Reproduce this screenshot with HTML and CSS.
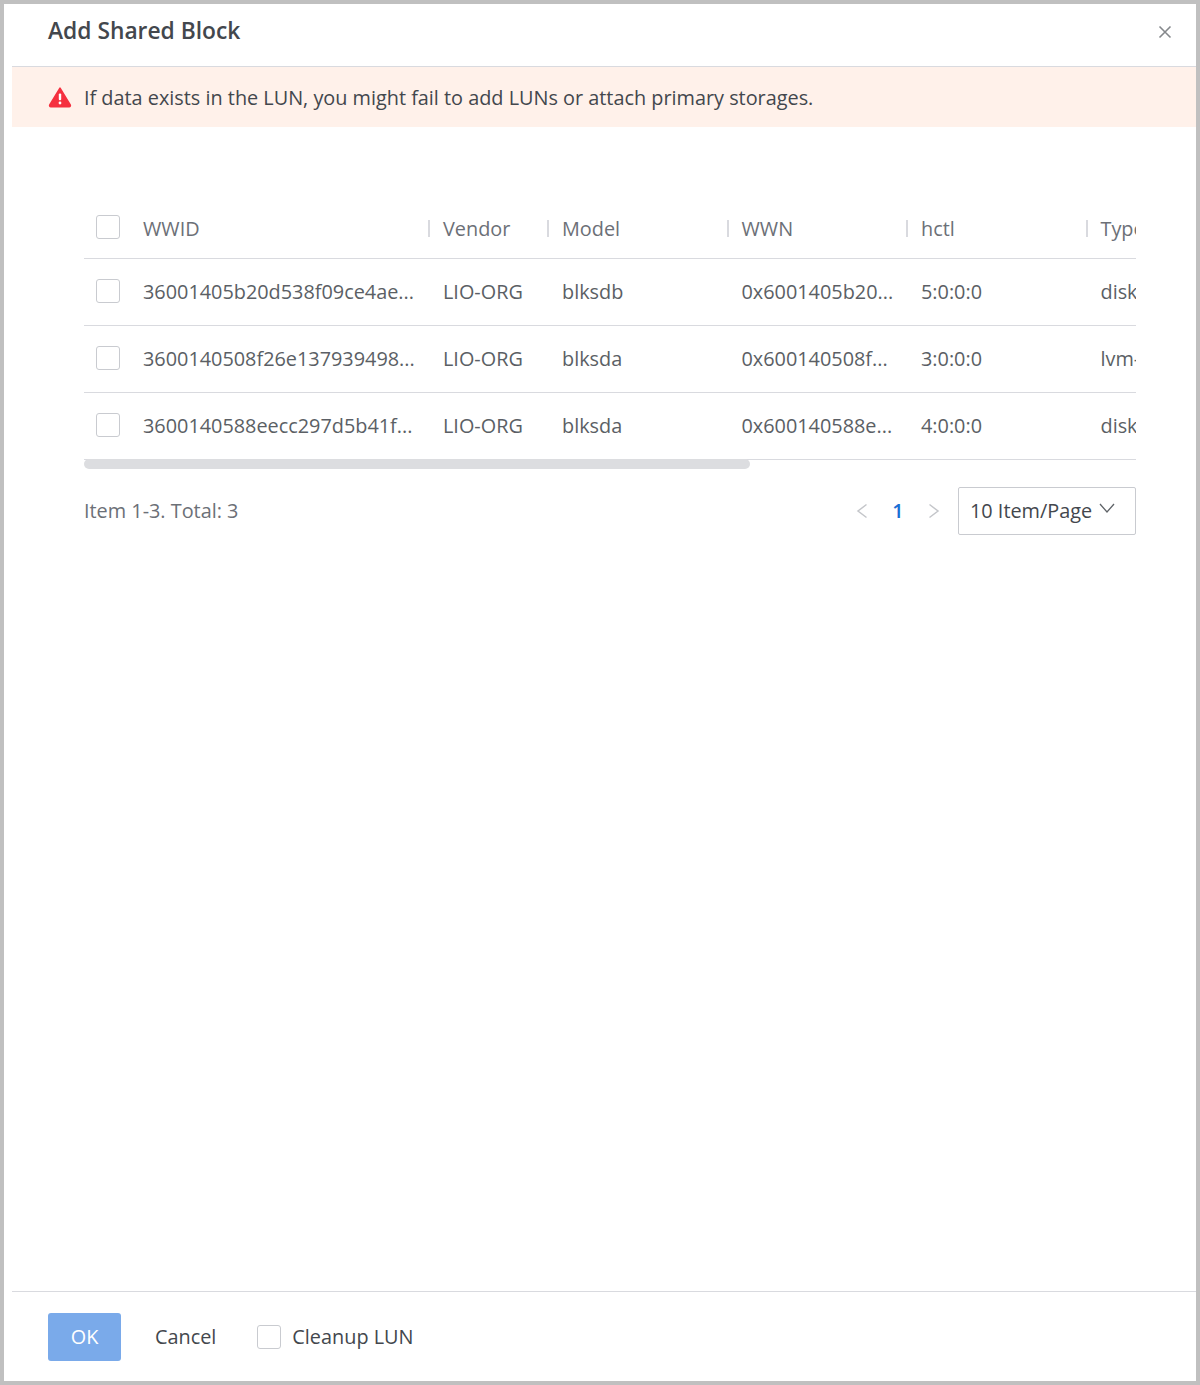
FILE: index.html
```html
<!DOCTYPE html>
<html lang="en">
<head>
<meta charset="utf-8">
<title>Add Shared Block</title>
<link rel="stylesheet" href="styles.css">
</head>
<body>
<div class="dialog">
  <header class="head">
    <h1 class="title">Add Shared Block</h1>
    <svg class="close" viewBox="0 0 14 14" width="14" height="14"><path d="M1.500 1.500l11 11M12.500 1.500l-11 11" stroke="#85888c" stroke-width="1.600" fill="none"/></svg>
  </header>
  <div class="alert">
    <svg class="warn" viewBox="0 0 24 22" width="24" height="22"><path d="M12 2.200L22.200 19a1.200 1.200 0 0 1-1 1.800H2.800a1.200 1.200 0 0 1-1-1.800z" fill="#f5303f" stroke="#f5303f" stroke-width="1.600" stroke-linejoin="round"/><rect x="10.800" y="7.500" width="2.400" height="6.800" rx="1" fill="#fff"/><circle cx="12" cy="17" r="1.400" fill="#fff"/></svg>
    <span>If data exists in the LUN, you might fail to add LUNs or attach primary storages.</span>
  </div>
  <main class="content">
    <div class="scroller">
      <table class="grid">
        <colgroup>
          <col class="c-check"><col class="c-wwid"><col class="c-vendor"><col class="c-mid"><col class="c-mid"><col class="c-mid"><col class="c-type">
        </colgroup>
        <thead>
          <tr>
            <th class="check"><span class="box"></span></th>
            <th>WWID</th>
            <th class="sep">Vendor</th>
            <th class="sep">Model</th>
            <th class="sep">WWN</th>
            <th class="sep">hctl</th>
            <th class="sep">Type</th>
          </tr>
        </thead>
        <tbody>
          <tr>
            <td class="check"><span class="box"></span></td>
            <td>36001405b20d538f09ce4ae...</td>
            <td>LIO-ORG</td>
            <td>blksdb</td>
            <td>0x6001405b20...</td>
            <td>5:0:0:0</td>
            <td>disk</td>
          </tr>
          <tr>
            <td class="check"><span class="box"></span></td>
            <td>3600140508f26e137939498...</td>
            <td>LIO-ORG</td>
            <td>blksda</td>
            <td>0x600140508f...</td>
            <td>3:0:0:0</td>
            <td>lvm-member</td>
          </tr>
          <tr>
            <td class="check"><span class="box"></span></td>
            <td>3600140588eecc297d5b41f...</td>
            <td>LIO-ORG</td>
            <td>blksda</td>
            <td>0x600140588e...</td>
            <td>4:0:0:0</td>
            <td>disk</td>
          </tr>
        </tbody>
      </table>
    </div>
    <div class="track"><div class="thumb"></div></div>
    <div class="pager">
      <span class="total">Item 1-3. Total: 3</span>
      <div class="pages">
        <svg class="arrow" viewBox="0 0 12 16" width="12" height="16"><path d="M10.500 1.500L2 8l8.500 6.500" stroke="#c4c6ca" stroke-width="1.500" fill="none"/></svg>
        <span class="current">1</span>
        <svg class="arrow" viewBox="0 0 12 16" width="12" height="16"><path d="M1.500 1.500L10 8l-8.500 6.500" stroke="#c4c6ca" stroke-width="1.500" fill="none"/></svg>
        <div class="select">
          <span>10 Item/Page</span>
          <svg class="caret" viewBox="0 0 16 10" width="16" height="10"><path d="M1 1l7 8 7-8" stroke="#5f6368" stroke-width="1.300" fill="none"/></svg>
        </div>
      </div>
    </div>
  </main>
  <footer class="foot">
    <button class="ok" type="button">OK</button>
    <span class="cancel">Cancel</span>
    <label class="cleanup"><span class="box"></span><span>Cleanup LUN</span></label>
  </footer>
</div>
</body>
</html>
```
FILE: styles.css
```css
* { box-sizing: border-box; }
html, body { margin: 0; height: 100%; }
body {
  font-family: "Open Sans", "Noto Sans", sans-serif;
  font-size: 19.850px;
  color: #4f5359;
  background: #fff;
}
.dialog {
  height: 1385px;
  border: 4px solid #c0c0c0;
  display: flex;
  flex-direction: column;
  padding-left: 8px;
  background: #fff;
}
.head {
  height: 63px;
  flex: none;
  display: flex;
  align-items: center;
  justify-content: space-between;
  padding: 0 24px 0 36px;
  border-bottom: 1px solid #d9dadf;
}
.title {
  margin: 0 0 10px;
  font-size: 22.800px;
  font-weight: 600;
  color: #43474d;
}
.close { margin-bottom: 6px; }
.alert {
  height: 60px;
  flex: none;
  display: flex;
  align-items: center;
  gap: 12px;
  padding-left: 36px;
  background: #fff1ea;
  color: #43474d;
}
.content {
  flex: 1;
  padding: 73px 60px 0 72px;
}
.scroller {
  overflow: hidden;
}
.grid {
  width: 1662px;
  table-layout: fixed;
  border-collapse: separate;
  border-spacing: 0;
}
.c-check { width: 47px; }
.c-wwid { width: 300px; }
.c-vendor { width: 119px; }
.c-mid { width: 179.500px; }
.c-type { width: 657.500px; }
th, td {
  padding: 0 12px 2px;
  text-align: left;
  white-space: nowrap;
  border-bottom: 1px solid #d9dadf;
}
th {
  height: 59px;
  font-weight: 400;
  color: #6c7077;
  position: relative;
}
td { height: 67px; color: #5b5f65; overflow: hidden; }
.sep::before {
  content: "";
  position: absolute;
  left: -3px;
  top: 20px;
  width: 2px;
  height: 17px;
  background: #d9dadf;
}
th.check, td.check { padding: 0 0 2px 12px; }
.box {
  display: block;
  width: 24px;
  height: 24px;
  border: 1px solid #c9cbd0;
  border-radius: 3px;
  background: #fff;
}
th.check .box { margin-bottom: 2px; }
.track {
  height: 10px;
  margin-top: -1px;
}
.thumb {
  width: 666px;
  height: 10px;
  border-radius: 5px;
  background: #dcdde0;
}
.pager {
  display: flex;
  align-items: center;
  justify-content: space-between;
  height: 48px;
  margin-top: 18px;
}
.total { color: #6c7077; padding-bottom: 2px; }
.pages {
  display: flex;
  align-items: center;
  gap: 24px;
}
.current { color: #1a6fd4; font-weight: 600; width: 12px; text-align: center; padding-bottom: 2px; }
.select {
  width: 178px;
  height: 48px;
  margin-left: -6px;
  border: 1px solid #c9cbd0;
  border-radius: 2px;
  display: flex;
  align-items: center;
  gap: 7px;
  padding: 0 11px 2px;
  color: #43474d;
}
.caret { margin-top: -4px; flex: none; }
.foot {
  height: 90px;
  flex: none;
  border-top: 1px solid #d9dadf;
  display: flex;
  align-items: center;
  padding-left: 36px;
}
.ok {
  width: 73px;
  height: 48px;
  border: 0;
  border-radius: 3px;
  background: #7aaaea;
  color: #fff;
  font: inherit;
}
.cancel { margin-left: 34px; color: #43474d; }
.cleanup {
  margin-left: 41px;
  display: flex;
  align-items: center;
  gap: 11px;
  color: #43474d;
}
```
